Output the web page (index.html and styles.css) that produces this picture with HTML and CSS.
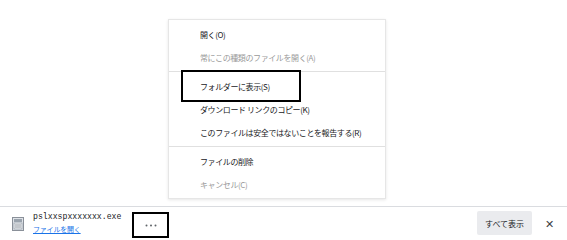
FILE: index.html
```html
<!DOCTYPE html>
<html lang="ja">
<head>
<meta charset="utf-8">
<link rel="stylesheet" href="styles.css">
</head>
<body>
<div class="page">
  <div class="content"></div>
  <div class="shelf">
    <div class="item">
      <svg class="file-icon" width="12" height="14" viewBox="0 0 12 14">
        <rect x="0.5" y="0.5" width="11" height="13" fill="#dfe3e8" stroke="#8a9099"/>
        <rect x="2" y="2" width="8" height="3" fill="#9aa3ad"/>
        <rect x="2" y="6" width="8" height="6" fill="#f3f4f6" stroke="#9aa3ad" stroke-width="0.8"/>
        <line x1="3" y1="8" x2="9" y2="8" stroke="#7c8590" stroke-width="0.8"/>
        <line x1="3" y1="10" x2="9" y2="10" stroke="#7c8590" stroke-width="0.8"/>
      </svg>
      <div class="names">
        <div class="fname">pslxxspxxxxxxx.exe</div>
        <a class="open" href="#">ファイルを開く</a>
      </div>
      <div class="dots">
        <svg width="12" height="3" viewBox="0 0 12 3">
          <circle cx="1.5" cy="1.5" r="1" fill="#5f6368"/>
          <circle cx="6" cy="1.5" r="1" fill="#5f6368"/>
          <circle cx="10.5" cy="1.5" r="1" fill="#5f6368"/>
        </svg>
      </div>
    </div>
    <div class="spacer"></div>
    <div class="showall">すべて表示</div>
    <div class="close">✕</div>
  </div>
  <div class="menu">
    <div class="mi">開く(O)</div>
    <div class="mi dis">常にこの種類のファイルを開く(A)</div>
    <div class="sep"></div>
    <div class="mi">フォルダーに表示(S)</div>
    <div class="mi">ダウンロード リンクのコピー(K)</div>
    <div class="mi">このファイルは安全ではないことを報告する(R)</div>
    <div class="sep"></div>
    <div class="mi">ファイルの削除</div>
    <div class="mi dis">キャンセル(C)</div>
  </div>
  <div class="mark"></div>
</div>
</body>
</html>
```
FILE: styles.css
```css
html, body {
  margin: 0;
  padding: 0;
  background: #ffffff;
}
body {
  font-family: "Noto Sans CJK JP", "Noto Sans", sans-serif;
  font-size: 8px;
  color: #202124;
}
.page {
  position: relative;
  width: 567px;
  height: 240px;
  overflow: hidden;
}
.content {
  height: 206px;
}
.shelf {
  height: 33px;
  border-top: 1px solid #dadce0;
  background: #ffffff;
  display: flex;
  align-items: center;
  padding-left: 12px;
  box-sizing: border-box;
}
.item {
  display: flex;
  align-items: center;
}
.file-icon {
  display: block;
  margin-right: 9px;
  margin-top: 2px;
}
.names {
  display: flex;
  flex-direction: column;
  width: 100px;
}
.fname {
  font-family: "Liberation Mono", monospace;
  font-size: 8.2px;
  line-height: 13px;
  color: #202124;
}
.open {
  font-size: 7px;
  line-height: 13px;
  letter-spacing: -0.2px;
  color: #1a73e8;
  text-decoration: underline;
}
.dots {
  width: 33px;
  height: 22px;
  border: 2px solid #000;
  display: flex;
  align-items: center;
  justify-content: center;
  margin-left: -1px;
  margin-top: 4px;
}
.dots svg {
  display: block;
}
.spacer {
  flex: 1;
}
.showall {
  background: #eaebee;
  border-radius: 2px;
  width: 55px;
  height: 24px;
  display: flex;
  align-items: center;
  justify-content: center;
  font-size: 8px;
  color: #202124;
}
.close {
  width: 35px;
  text-align: center;
  font-size: 11px;
  color: #3c4043;
}
.menu {
  position: absolute;
  left: 168px;
  top: 19px;
  width: 216px;
  background: #fff;
  border: 1px solid #e6e6e6;
  box-shadow: 0 1px 3px rgba(0,0,0,0.10);
  padding: 3px 0 2px;
}
.mi {
  height: 23px;
  line-height: 23px;
  padding-left: 31px;
  font-size: 8px;
  letter-spacing: -0.4px;
  color: #202124;
  white-space: nowrap;
}
.mi.dis {
  color: #9a9a9a;
}
.sep {
  height: 1px;
  background: #e0e0e0;
  margin: 2px 0 3px;
}
.mark {
  position: absolute;
  left: 181px;
  top: 70px;
  width: 116px;
  height: 28px;
  border: 2px solid #000;
}
```
